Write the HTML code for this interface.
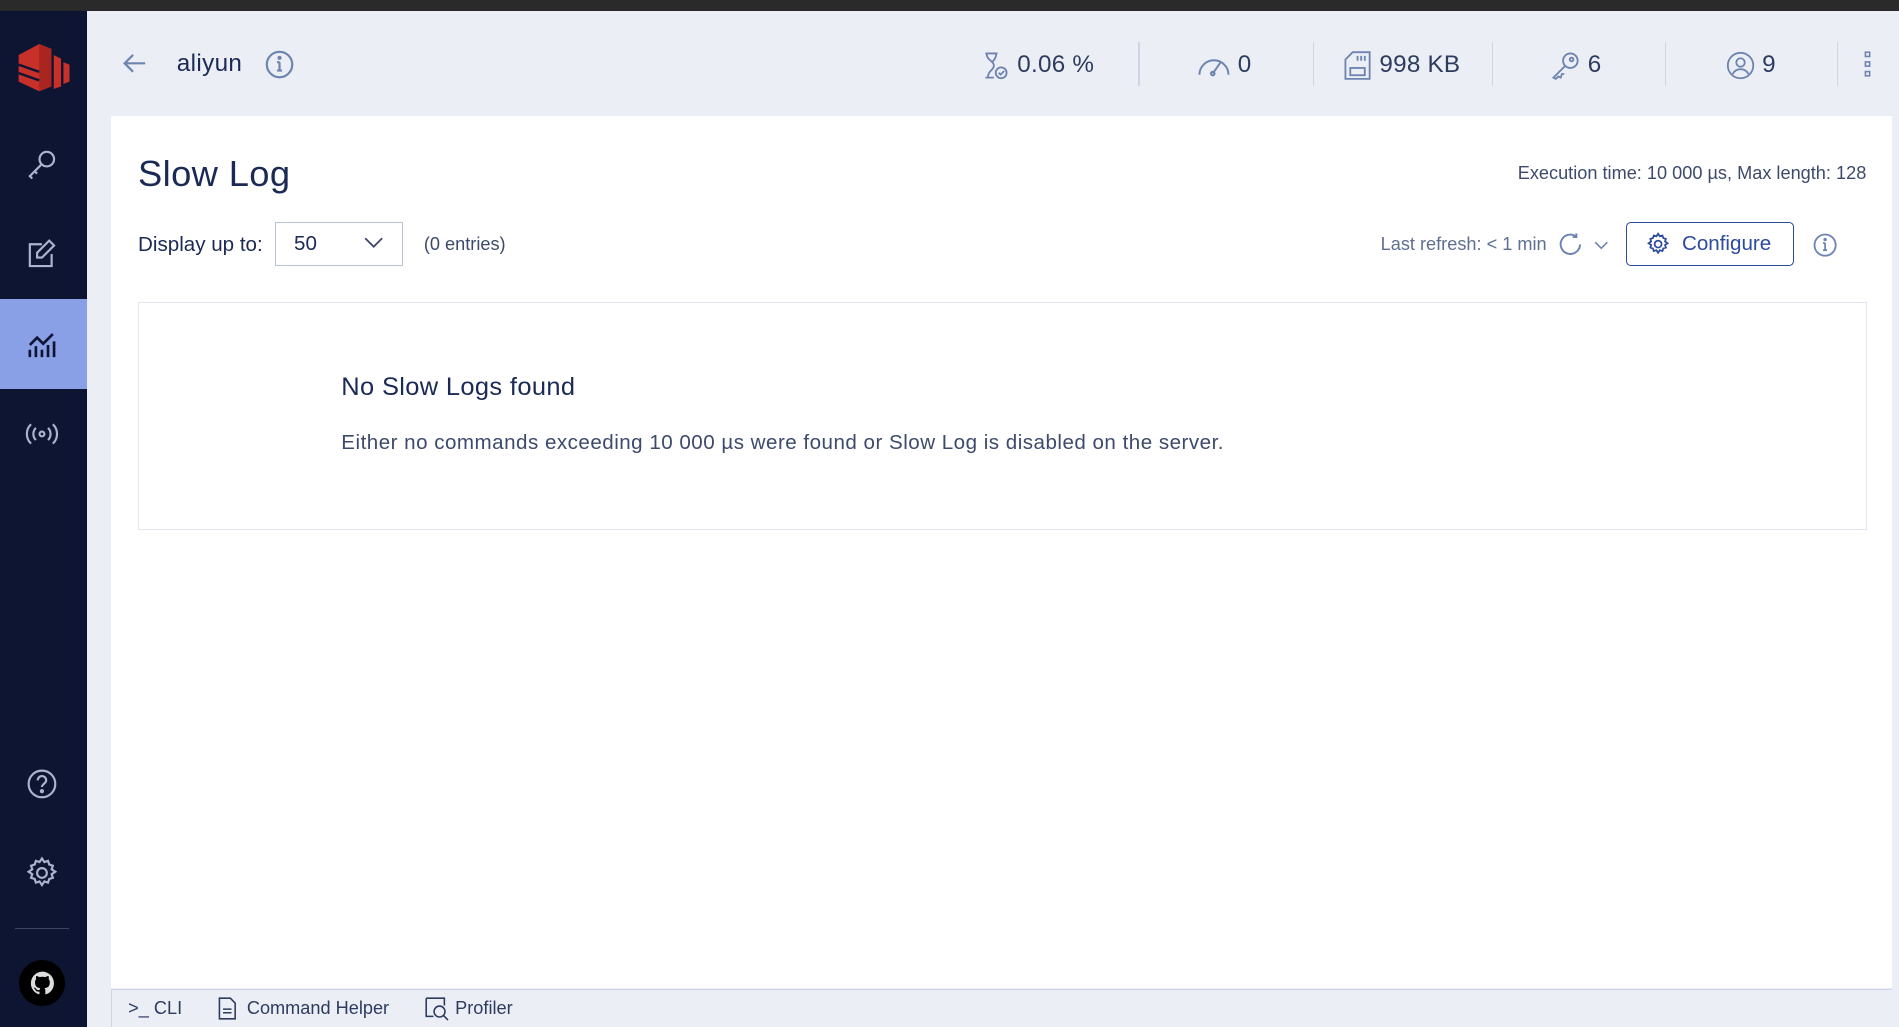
<!DOCTYPE html>
<html><head><meta charset="utf-8"><style>
html,body{margin:0;padding:0;overflow:hidden}
body{width:1568px;height:848px;zoom:1.21110;background:#ebeef5;font-family:"Liberation Sans",sans-serif;color:#1b2a55;position:relative}
.top{position:absolute;left:0;top:0;width:1568px;height:9px;background:#2a2a2a}
.side{position:absolute;left:0;top:9px;width:72px;height:839px;background:#0e1533}
.act{position:absolute;left:0;top:247px;width:72px;height:74px;background:#8aa0e6}
.ic{position:absolute;left:21px;width:28px;height:28px}
.hdr{position:absolute;top:9px;left:72px;right:0;height:87px}
.stat{position:absolute;top:33px;font-size:20px;color:#2d3b5e;display:flex;align-items:center;gap:6px;letter-spacing:.2px}
.sep{position:absolute;top:26px;width:1px;height:36px;background:#cdd4e3}
.panel{position:absolute;left:92px;top:96px;width:1470px;height:720px;background:#fff}
.bot{position:absolute;left:92px;top:817px;width:1470px;height:31px;background:#ebeef5;border-top:1px solid #cdd4e3;border-left:1px solid #cdd4e3;box-sizing:border-box;font-size:15px;color:#2d3b5e}
</style></head><body>
<div class="top"></div>
<div class="side">
 <svg style="position:absolute;left:12px;top:22px" width="46" height="46" viewBox="0 0 46 46"><path d="M3 14 L20 5 L30 9 L30 40 L20 44 L3 36 Z" fill="#c8302a"/><path d="M20 5 L30 9 L30 40 L20 44Z" fill="#a82520"/><path d="M32 14 L38 17 L38 40 L32 42Z" fill="#c8302a"/><path d="M40 20 L45 22 L45 36 L40 38Z" fill="#c8302a"/><path d="M3 22 L20 28 M3 29 L20 35" stroke="#0e1533" stroke-width="2"/></svg>
 <svg class="ic" style="top:112px" viewBox="0 0 28 28" fill="none" stroke="#aab4cc" stroke-width="1.8"><circle cx="18" cy="10" r="6"/><path d="M14 14 L4 24 L6 26 M8 20 L10 22"/></svg>
 <svg class="ic" style="top:187px" viewBox="0 0 28 28" fill="none" stroke="#aab4cc" stroke-width="1.8"><path d="M22 14v10H4V6h10"/><path d="M20 3l4 4-10 10h-4v-4z"/></svg>
 <svg class="ic" style="top:335px" viewBox="0 0 28 28" fill="none" stroke="#aab4cc" stroke-width="1.8"><circle cx="14" cy="14" r="2"/><path d="M9 9a7 7 0 000 10M19 9a7 7 0 010 10M5 6a11 11 0 000 16M23 6a11 11 0 010 16"/></svg>
 <svg class="ic" style="top:624px" viewBox="0 0 28 28" fill="none" stroke="#aab4cc" stroke-width="1.8"><circle cx="14" cy="14" r="11"/><path d="M10.5 11a3.5 3.5 0 117 0c0 2.5-3.5 3-3.5 5.5"/><circle cx="14" cy="20" r=".8" fill="#aab4cc"/></svg>
 <svg class="ic" style="top:698px" viewBox="0 0 28 28" fill="none" stroke="#aab4cc" stroke-width="1.8"><circle cx="14" cy="14" r="4"/><path d="M14 2l2 3 3-1 1 3 3 1-1 3 3 2-3 2 1 3-3 1-1 3-3-1-2 3-2-3-3 1-1-3-3-1 1-3-3-2 3-2-1-3 3-1 1-3 3 1z"/></svg>
 <div style="position:absolute;left:12px;top:757px;width:45px;height:1px;background:#3a4466"></div>
 <div style="position:absolute;left:16px;top:784px;width:38px;height:38px;border-radius:50%;background:#000"></div>
 <svg style="position:absolute;left:24px;top:792px" width="22" height="22" viewBox="0 0 16 16"><path fill="#ddd" d="M8 1a7 7 0 00-2.2 13.6c.4.1.5-.2.5-.4v-1.3c-2 .4-2.4-.9-2.4-.9-.3-.8-.8-1-.8-1-.6-.4.1-.4.1-.4.7 0 1.1.7 1.1.7.6 1.1 1.7.8 2.1.6.1-.5.2-.8.4-1-1.600-.2-3.2-.8-3.2-3.5 0-.8.3-1.4.7-1.9-.1-.2-.3-.9.1-1.9 0 0 .6-.2 1.9.7a6.6 6.6 0 013.5 0c1.3-.9 1.9-.7 1.9-.7.4 1 .1 1.7.1 1.9.4.5.7 1.1.7 1.9 0 2.7-1.6 3.3-3.2 3.5.3.2.5.7.5 1.3v2c0 .2.1.5.5.4A7 7 0 008 1z"/></svg>
</div>
<div class="act"></div>
<svg class="ic" style="top:271px;position:absolute;left:21px" viewBox="0 0 28 28" fill="none" stroke="#0e1533" stroke-width="2.2"><path d="M4 24v-6M9 24v-9M14 24v-6M19 24v-10M24 24v-13M4 14l6-6 5 5 8-8"/></svg>
<div class="hdr">
 <svg style="position:absolute;left:28px;top:32px" width="22" height="22" viewBox="0 0 22 22" fill="none" stroke="#6d83b0" stroke-width="1.8"><path d="M20 11H3M10 4l-7 7 7 7"/></svg>
 <div style="position:absolute;left:74px;top:32px;font-size:20px;color:#1b2a55;letter-spacing:.3px">aliyun</div>
 <svg style="position:absolute;left:147px;top:32px" width="24" height="24" viewBox="0 0 24 24" fill="none" stroke="#6d83b0" stroke-width="1.8"><circle cx="12" cy="12" r="10.5"/><path d="M12 10v7M10 17h4M10 10h2"/><circle cx="12" cy="6.5" r=".8" fill="#6d83b0"/></svg>
 <div class="stat" style="left:740px"><svg width="22" height="24" viewBox="0 0 22 24" fill="none" stroke="#6d83b0" stroke-width="1.5"><path d="M2 2h10M2 22h7M3 2c0 6 6 6 6 10s-5 4-5 10M11 2c0 4-2 5-3 7"/><circle cx="15" cy="18" r="4.5"/><path d="M13 18l1.5 1.5 3-3"/></svg>0.06 %</div>
 <div class="sep" style="left:868px"></div>
 <div class="stat" style="left:916px"><svg width="28" height="20" viewBox="0 0 28 20" fill="none" stroke="#6d83b0" stroke-width="1.6"><path d="M2 18a12 12 0 0124 0"/><path d="M13 17l7-10"/><circle cx="13" cy="17" r="1.5"/></svg>0</div>
 <div class="sep" style="left:1012px"></div>
 <div class="stat" style="left:1037px"><svg width="24" height="24" viewBox="0 0 24 24" fill="none" stroke="#6d83b0" stroke-width="1.5"><path d="M8 1h14v22H2V7z"/><rect x="6" y="14" width="12" height="6"/><path d="M12 4v4M15 4v4M18 4v4"/></svg>998 KB</div>
 <div class="sep" style="left:1160px"></div>
 <div class="stat" style="left:1209px"><svg width="24" height="24" viewBox="0 0 24 24" fill="none" stroke="#6d83b0" stroke-width="1.5"><circle cx="16" cy="8" r="6"/><circle cx="17" cy="7" r="1.5"/><path d="M12 12L2 22l2 1 2-2 2 1 1-3 2 0"/></svg>6</div>
 <div class="sep" style="left:1303px"></div>
 <div class="stat" style="left:1353px"><svg width="24" height="24" viewBox="0 0 24 24" fill="none" stroke="#6d83b0" stroke-width="1.5"><circle cx="12" cy="12" r="10.5"/><circle cx="12" cy="9.5" r="3.5"/><path d="M5.5 19c1.5-3 4-4 6.5-4s5 1 6.5 4"/></svg>9</div>
 <div class="sep" style="left:1445px"></div>
 <svg style="position:absolute;left:1466px;top:33px" width="8" height="22" viewBox="0 0 8 22" fill="none" stroke="#6d83b0" stroke-width="1.3"><rect x="2" y="1" width="3.5" height="3.5"/><rect x="2" y="9" width="3.5" height="3.5"/><rect x="2" y="17" width="3.5" height="3.5"/></svg>
</div>
<div class="panel">
 <div style="position:absolute;left:22px;top:30px;font-size:30px;color:#1b2a55;letter-spacing:.3px">Slow Log</div>
 <div style="position:absolute;right:21px;top:39px;font-size:15px;color:#3d4a6b">Execution time: 10 000 µs, Max length: 128</div>
 <div style="position:absolute;left:22px;top:96px;font-size:17px;color:#1b2a55">Display up to:</div>
 <div style="position:absolute;left:135px;top:87px;width:104px;height:35px;border:1px solid #b8c1d6;background:#fff;font-size:17px"><span style="position:absolute;left:15px;top:8px">50</span><svg style="position:absolute;left:73px;top:12px" width="16" height="10" viewBox="0 0 16 10" fill="none" stroke="#3d4a6b" stroke-width="1.5"><path d="M1 1l7 7 7-7"/></svg></div>
 <div style="position:absolute;left:258px;top:97px;font-size:15px;color:#3d4a6b">(0 entries)</div>
 <div style="position:absolute;left:1048px;top:97px;font-size:15px;color:#5f6f90">Last refresh: &lt; 1 min</div>
 <svg style="position:absolute;left:1194px;top:95px" width="22" height="22" viewBox="0 0 22 22" fill="none" stroke="#6d83b0" stroke-width="1.6"><path d="M19 11a8 8 0 11-3-6.3M16 2v3h-3"/></svg>
 <svg style="position:absolute;left:1224px;top:103px" width="12" height="8" viewBox="0 0 12 8" fill="none" stroke="#6d83b0" stroke-width="1.3"><path d="M1 1l5 5 5-5"/></svg>
 <div style="position:absolute;left:1251px;top:87px;width:137px;height:35px;border:1px solid #2d4a9e;border-radius:4px;font-size:17px;color:#2d4a9e"><svg style="position:absolute;left:15px;top:8px" width="20" height="20" viewBox="0 0 28 28" fill="none" stroke="#2d4a9e" stroke-width="2"><circle cx="14" cy="14" r="4"/><path d="M14 2l2 3 3-1 1 3 3 1-1 3 3 2-3 2 1 3-3 1-1 3-3-1-2 3-2-3-3 1-1-3-3-1 1-3-3-2 3-2-1-3 3-1 1-3 3 1z"/></svg><span style="position:absolute;left:45px;top:8px">Configure</span></div>
 <svg style="position:absolute;left:1405px;top:96px" width="20" height="20" viewBox="0 0 24 24" fill="none" stroke="#6d83b0" stroke-width="1.8"><circle cx="12" cy="12" r="10.5"/><path d="M12 10v7M10 17h4M10 10h2"/><circle cx="12" cy="6.5" r=".8" fill="#6d83b0"/></svg>
 <div style="position:absolute;left:22px;top:153px;width:1426px;height:187px;border:1px solid #e2e6ef">
  <div style="position:absolute;left:167px;top:58px;font-size:21px;color:#1b2a55;letter-spacing:.3px">No Slow Logs found</div>
  <div style="position:absolute;left:167px;top:106px;font-size:17px;color:#3d4a6b;letter-spacing:.4px">Either no commands exceeding 10 000 µs were found or Slow Log is disabled on the server.</div>
 </div>
</div>
<div class="bot">
 <span style="position:absolute;left:13px;top:6px">&gt;_ CLI</span>
 <svg style="position:absolute;left:86px;top:5px" width="18" height="20" viewBox="0 0 18 20" fill="none" stroke="#2d3b5e" stroke-width="1.3"><path d="M2 1h9l4 4v13H2z"/><path d="M5 10h7M5 13h7"/></svg>
 <span style="position:absolute;left:111px;top:6px">Command Helper</span>
 <svg style="position:absolute;left:258px;top:5px" width="20" height="20" viewBox="0 0 20 20" fill="none" stroke="#2d3b5e" stroke-width="1.3"><path d="M1 1h15v6M1 1v15h6"/><circle cx="12" cy="12" r="4.5"/><path d="M15 15l4 4"/></svg>
 <span style="position:absolute;left:283px;top:6px">Profiler</span>
</div>
</body></html>
